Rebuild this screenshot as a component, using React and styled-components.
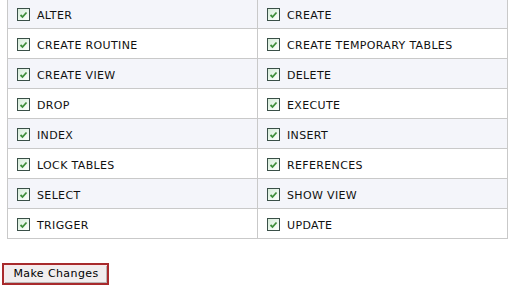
import React from 'react';
import styled, { createGlobalStyle } from 'styled-components';

const GlobalStyle = createGlobalStyle`
  html, body {
    margin: 0;
    padding: 0;
    background: #ffffff;
    font-family: "DejaVu Sans", Verdana, sans-serif;
  }
`;

const Page = styled.main`
  display: flex;
  flex-direction: column;
  align-items: flex-start;
  width: 514px;
  height: 303px;
  overflow: hidden;
`;

const PrivTable = styled.div`
  display: grid;
  grid-template-columns: 250px 250px;
  width: 500px;
  margin: -2px 0 0 7px;
  border-left: 1px solid #c9c9c9;
  border-top: 1px solid #c9c9c9;
`;

const PrivCell = styled.label`
  display: flex;
  align-items: center;
  gap: 7px;
  height: 30px;
  padding: 3px 0 0 9px;
  box-sizing: border-box;
  border-right: 1px solid #c9c9c9;
  border-bottom: 1px solid #c9c9c9;
  background: ${(p) => (p.$shaded ? '#f4f5fa' : '#ffffff')};
  font-size: 11px;
  color: #111;
  letter-spacing: 0.35px;
`;

const Box = styled.span`
  display: inline-flex;
  align-items: center;
  justify-content: center;
  width: 13px;
  height: 13px;
  box-sizing: border-box;
  border: 1px solid #3a5048;
  background: linear-gradient(135deg, #d6ecd9 0%, #eef8ef 60%, #ffffff 100%);
  margin-top: -1px;
`;

const Footer = styled.div`
  margin: 23px 0 0 2px;
`;

const SubmitButton = styled.button`
  width: 107px;
  height: 22px;
  padding: 0 0 0 1px;
  box-sizing: border-box;
  border: 2px solid #a82a2c;
  outline: none;
  background: #f1edee;
  box-shadow: inset 1px 1px 0 #fbe9ea, inset -1px -1px 0 #b9b3b4;
  font-family: "DejaVu Sans", Verdana, sans-serif;
  font-size: 11px;
  letter-spacing: 0.4px;
  color: #000;
  text-align: center;
`;

const Check = () => (
  <Box>
    <svg width="9" height="8" viewBox="0 0 9 8">
      <path d="M1.5 4 L3.5 6 L7.5 1.5" fill="none" stroke="#3f8f3a" strokeWidth="1.8" />
    </svg>
  </Box>
);

const privileges = [
  ['ALTER', 'CREATE'],
  ['CREATE ROUTINE', 'CREATE TEMPORARY TABLES'],
  ['CREATE VIEW', 'DELETE'],
  ['DROP', 'EXECUTE'],
  ['INDEX', 'INSERT'],
  ['LOCK TABLES', 'REFERENCES'],
  ['SELECT', 'SHOW VIEW'],
  ['TRIGGER', 'UPDATE'],
];

const App = () => {
  return (
    <Page>
      <GlobalStyle />
      <PrivTable>
        {privileges.map((row, i) =>
          row.map((name) => (
            <PrivCell key={name} $shaded={i % 2 === 0}>
              <Check />
              {name}
            </PrivCell>
          ))
        )}
      </PrivTable>
      <Footer>
        <SubmitButton>Make Changes</SubmitButton>
      </Footer>
    </Page>
  );
};

export default App;
